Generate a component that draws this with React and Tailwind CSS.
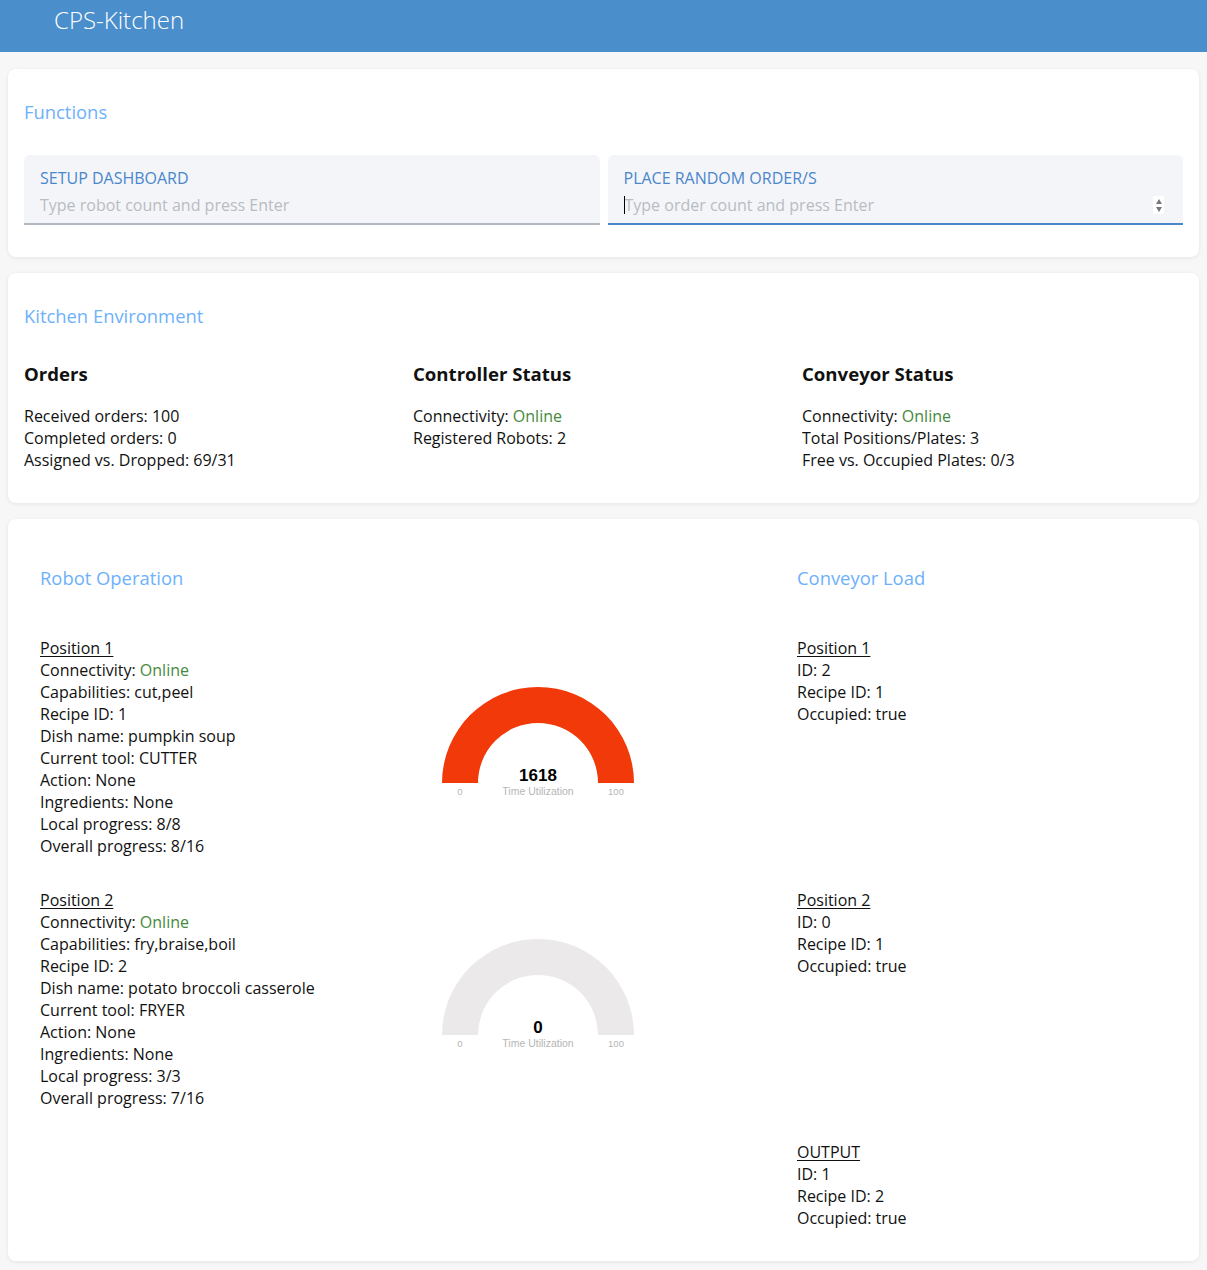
import React from 'react';

const robots = [
  {
    name: 'Position 1',
    capabilities: 'cut,peel',
    recipe: 1,
    dish: 'pumpkin soup',
    tool: 'CUTTER',
    local: '8/8',
    overall: '8/16',
    value: 1618,
    color: '#f2390a',
  },
  {
    name: 'Position 2',
    capabilities: 'fry,braise,boil',
    recipe: 2,
    dish: 'potato broccoli casserole',
    tool: 'FRYER',
    local: '3/3',
    overall: '7/16',
    value: 0,
    color: '#ebe9ea',
  },
];

const plates = [
  { name: 'Position 1', id: 2, recipe: 1 },
  { name: 'Position 2', id: 0, recipe: 1 },
  { name: 'OUTPUT', id: 1, recipe: 2 },
];

const Online = () => <span className="text-[#458a3c]">Online</span>;

const Gauge = ({ value, color }) => (
  <svg width="192" height="112" viewBox="0 0 192 112">
    <path d="M0,96 A96,96 0 0 1 192,96 L156,96 A60,60 0 0 0 36,96 Z" fill={color} />
    <text x="96" y="94" textAnchor="middle" fontFamily="Liberation Sans, Arial, sans-serif" fontWeight="700" fontSize="17" fill="#000">{value}</text>
    <text x="18" y="108" textAnchor="middle" fontFamily="Liberation Sans, Arial, sans-serif" fontSize="9.5" fill="#b5b5b5">0</text>
    <text x="96" y="108" textAnchor="middle" fontFamily="Liberation Sans, Arial, sans-serif" fontSize="10.5" fill="#b5b5b5">Time Utilization</text>
    <text x="174" y="108" textAnchor="middle" fontFamily="Liberation Sans, Arial, sans-serif" fontSize="9.5" fill="#b5b5b5">100</text>
  </svg>
);

const Field = ({ label, placeholder, focused }) => (
  <div className={`bg-[#f4f5f9] rounded-t-md px-4 pt-3 pb-[7px] border-b-2 ${focused ? 'border-[#4a86cc]' : 'border-[#b2b8c1]'}`}>
    <div className="text-[16px] leading-[22px] text-[#4a86cc] uppercase">{label}</div>
    <div className="mt-[5px] flex items-center h-[22px]">
      {focused && <span className="w-px h-[18px] bg-black" />}
      <input
        className="flex-1 bg-transparent outline-none text-[16px] leading-[22px] placeholder:text-[#b8bcc2]"
        placeholder={placeholder}
      />
      {focused && (
        <span className="flex flex-col items-center justify-center gap-[3px] w-[11px] h-[18px] bg-white mr-[3px]">
          <span className="w-0 h-0 border-l-[3.5px] border-r-[3.5px] border-b-[5px] border-l-transparent border-r-transparent border-b-[#777]" />
          <span className="w-0 h-0 border-l-[3.5px] border-r-[3.5px] border-t-[5px] border-l-transparent border-r-transparent border-t-[#777]" />
        </span>
      )}
    </div>
  </div>
);

const App = () => {
  return (
    <div className="min-h-screen bg-[#f7f7f7] text-[#111] text-[16px] leading-[22px]" style={{ fontFamily: '"Open Sans", "Noto Sans", sans-serif' }}>
      <div className="h-[52px] bg-[#4a8ecc] px-[54px] pt-1">
        <h1 className="text-white text-[24px] leading-8 font-light">CPS-Kitchen</h1>
      </div>

      <div className="px-2 pt-[17px] pb-[9px] flex flex-col gap-4">
        <div className="bg-white rounded-lg shadow-[0_1px_4px_rgba(0,0,0,0.08)] px-4 pt-[31px] pb-8">
          <h2 className="text-[18.4px] leading-6 text-[#6db1fb]">Functions</h2>
          <div className="mt-[31px] grid grid-cols-2 gap-2">
            <Field label="Setup Dashboard" placeholder="Type robot count and press Enter" />
            <Field label="Place random order/s" placeholder="Type order count and press Enter" focused />
          </div>
        </div>

        <div className="bg-white rounded-lg shadow-[0_1px_4px_rgba(0,0,0,0.08)] px-4 pt-[31px] pb-8">
          <h2 className="text-[18.4px] leading-6 text-[#6db1fb]">Kitchen Environment</h2>
          <div className="mt-[33px] grid grid-cols-[389px_389px_1fr]">
            <div>
              <h3 className="text-[18.6px] leading-[26px] font-bold">Orders</h3>
              <div className="mt-[18px]">
                <p>Received orders: 100</p>
                <p>Completed orders: 0</p>
                <p>Assigned vs. Dropped: 69/31</p>
              </div>
            </div>
            <div>
              <h3 className="text-[18.6px] leading-[26px] font-bold">Controller Status</h3>
              <div className="mt-[18px]">
                <p>Connectivity: <Online /></p>
                <p>Registered Robots: 2</p>
              </div>
            </div>
            <div>
              <h3 className="text-[18.6px] leading-[26px] font-bold">Conveyor Status</h3>
              <div className="mt-[18px]">
                <p>Connectivity: <Online /></p>
                <p>Total Positions/Plates: 3</p>
                <p>Free vs. Occupied Plates: 0/3</p>
              </div>
            </div>
          </div>
        </div>

        <div className="bg-white rounded-lg shadow-[0_1px_4px_rgba(0,0,0,0.08)] px-8 pt-[47px] pb-8">
          <div className="grid grid-cols-[402px_192px_1fr] gap-y-8">
            <h2 className="col-span-2 text-[18.4px] leading-6 text-[#6db1fb] mb-[15px]">Robot Operation</h2>
            <h2 className="pl-[163px] text-[18.4px] leading-6 text-[#6db1fb] mb-[15px]">Conveyor Load</h2>

            {plates.map((plate, i) => {
              const robot = robots[i];
              return (
                <React.Fragment key={plate.name}>
                  {robot ? (
                    <div className="h-[220px]">
                      <p className="underline underline-offset-2">{robot.name}</p>
                      <p>Connectivity: <Online /></p>
                      <p>Capabilities: {robot.capabilities}</p>
                      <p>Recipe ID: {robot.recipe}</p>
                      <p>Dish name: {robot.dish}</p>
                      <p>Current tool: {robot.tool}</p>
                      <p>Action: None</p>
                      <p>Ingredients: None</p>
                      <p>Local progress: {robot.local}</p>
                      <p>Overall progress: {robot.overall}</p>
                    </div>
                  ) : (
                    <div />
                  )}
                  <div className="pt-[50px]">
                    {robot && <Gauge value={robot.value} color={robot.color} />}
                  </div>
                  <div className="pl-[163px]">
                    <p className="underline underline-offset-2">{plate.name}</p>
                    <p>ID: {plate.id}</p>
                    <p>Recipe ID: {plate.recipe}</p>
                    <p>Occupied: true</p>
                  </div>
                </React.Fragment>
              );
            })}
          </div>
        </div>
      </div>
    </div>
  );
};

export default App;
